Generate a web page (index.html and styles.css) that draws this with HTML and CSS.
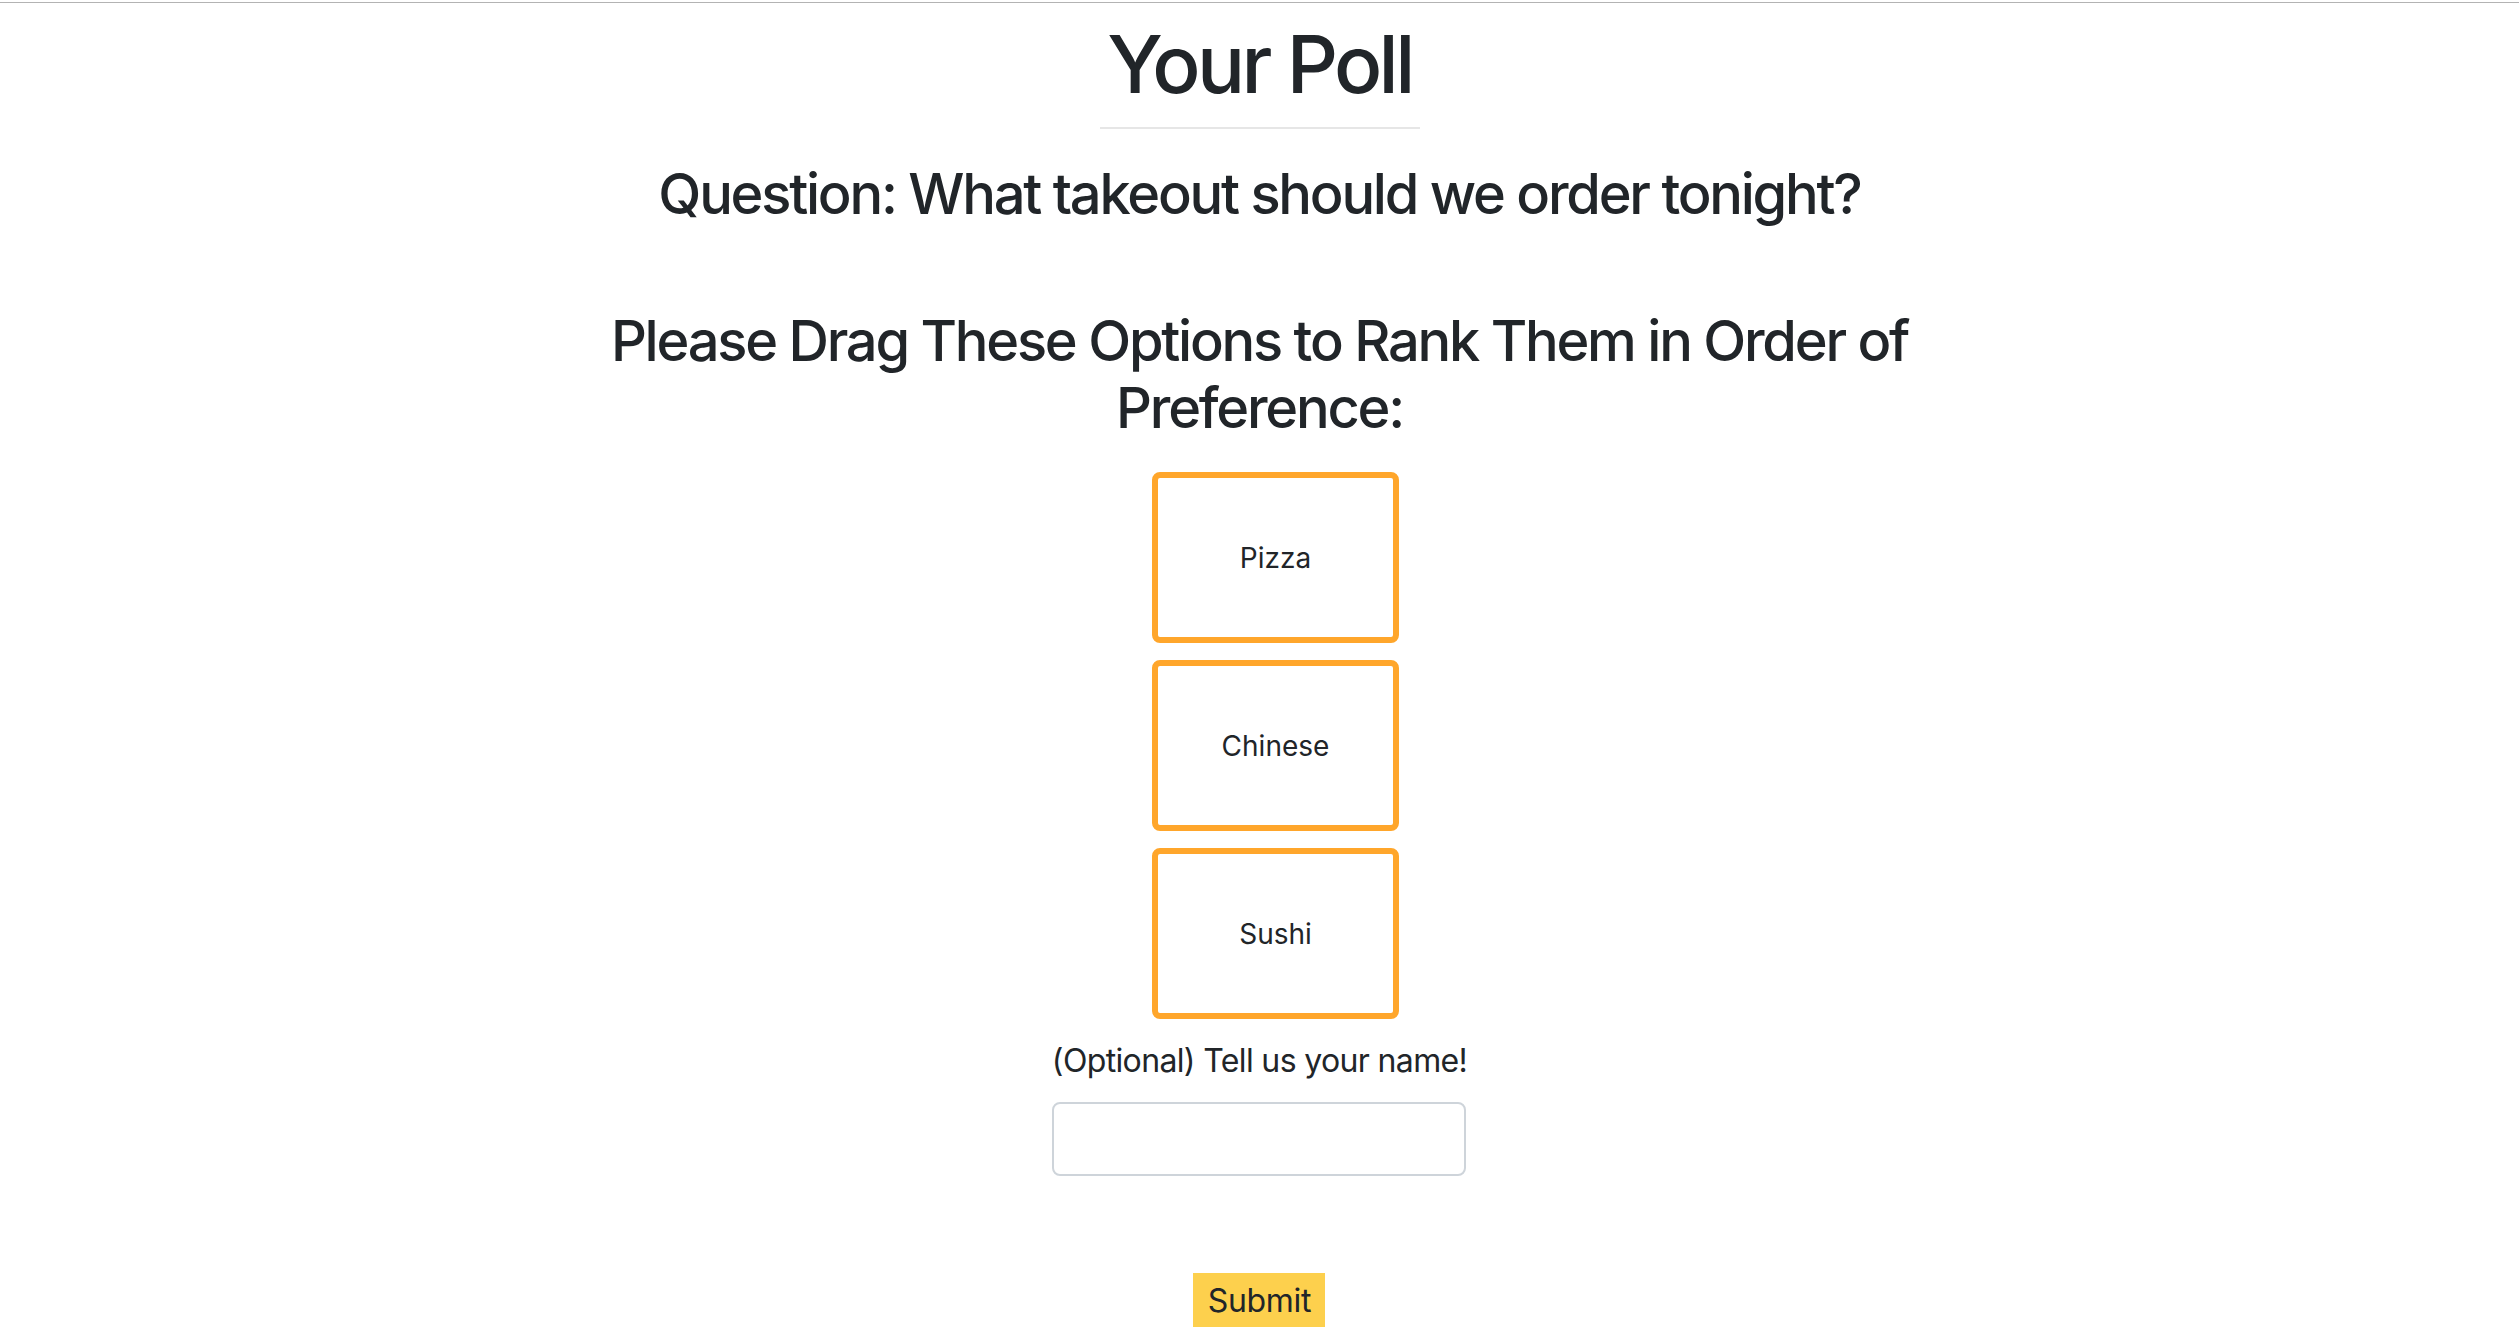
FILE: index.html
```html
<!DOCTYPE html>
<html lang="en">
<head>
<meta charset="utf-8">
<title>Your Poll</title>
<link rel="stylesheet" href="styles.css">
</head>
<body>
<div class="topline"></div>
<main class="poll">
  <h1 class="title">Your Poll</h1>
  <hr class="rule">
  <h3 class="question">Question: What takeout should we order tonight?</h3>
  <h3 class="instructions">Please Drag These Options to Rank Them in Order of Preference:</h3>
  <ul class="options">
    <li class="option">Pizza</li>
    <li class="option">Chinese</li>
    <li class="option">Sushi</li>
  </ul>
  <form class="name-form">
    <label class="name-label" for="name">(Optional) Tell us your name!</label>
    <input class="name-input" id="name" type="text">
    <button class="submit" type="button">Submit</button>
  </form>
</main>
</body>
</html>
```

FILE: styles.css
```css
html, body {
  margin: 0;
  padding: 0;
  background: #ffffff;
}

body {
  font-family: Inter, "Liberation Sans", sans-serif;
  color: #212529;
}

.topline {
  height: 1px;
  margin-top: 2px;
  background: #b3b3b3;
}

.poll {
  display: flex;
  flex-direction: column;
  align-items: center;
  text-align: center;
}

.title {
  margin: 13px 0 0;
  font-size: 80px;
  line-height: 96px;
  font-weight: 500;
  letter-spacing: -0.045em;
}

.rule {
  width: 320px;
  margin: 15px 0 0;
  border: 0;
  border-top: 2px solid #e6e6e6;
}

.question,
.instructions {
  margin: 0;
  font-size: 56px;
  line-height: 67px;
  font-weight: 500;
  letter-spacing: -0.04em;
}

.question {
  margin-top: 32px;
}

.instructions {
  margin-top: 80px;
  max-width: 1400px;
}

.options {
  list-style: none;
  margin: 30px 0 0;
  padding: 0 0 0 32px;
  display: flex;
  flex-direction: column;
  gap: 17px;
}

.option {
  width: 247px;
  height: 171px;
  box-sizing: border-box;
  border: 6px solid #ffa62b;
  border-radius: 8px;
  display: flex;
  align-items: center;
  justify-content: center;
  font-size: 28px;
  color: #212529;
}

.name-form {
  display: flex;
  flex-direction: column;
  align-items: center;
  margin-top: 18px;
}

.name-label {
  font-size: 32px;
  line-height: 48px;
  letter-spacing: -0.02em;
}

.name-input {
  margin-top: 17px;
  width: 414px;
  height: 74px;
  box-sizing: border-box;
  border: 2px solid #ced4da;
  border-radius: 8px;
  font-family: inherit;
  font-size: 32px;
  padding: 0 20px;
}

.submit {
  margin-top: 97px;
  width: 132px;
  height: 54px;
  border: 0;
  border-radius: 0;
  background: #fdd04d;
  color: #212529;
  font-family: inherit;
  font-size: 32px;
  letter-spacing: -0.01em;
  padding: 0;
}
```
